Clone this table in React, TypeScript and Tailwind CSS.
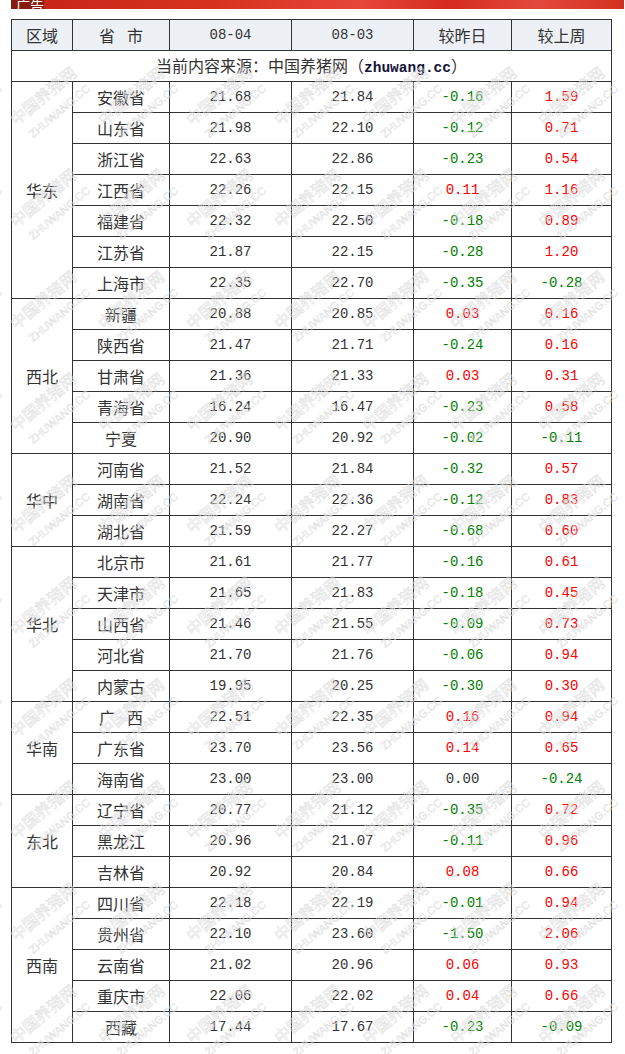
import React from "react";

type Row = [string, string, string, string, string];

const groups: { region: string; rows: Row[] }[] = [
  {
    region: "华东",
    rows: [
      ["安徽省", "21.68", "21.84", "-0.16", "1.59"],
      ["山东省", "21.98", "22.10", "-0.12", "0.71"],
      ["浙江省", "22.63", "22.86", "-0.23", "0.54"],
      ["江西省", "22.26", "22.15", "0.11", "1.16"],
      ["福建省", "22.32", "22.50", "-0.18", "0.89"],
      ["江苏省", "21.87", "22.15", "-0.28", "1.20"],
      ["上海市", "22.35", "22.70", "-0.35", "-0.28"],
    ],
  },
  {
    region: "西北",
    rows: [
      ["新疆", "20.88", "20.85", "0.03", "0.16"],
      ["陕西省", "21.47", "21.71", "-0.24", "0.16"],
      ["甘肃省", "21.36", "21.33", "0.03", "0.31"],
      ["青海省", "16.24", "16.47", "-0.23", "0.58"],
      ["宁夏", "20.90", "20.92", "-0.02", "-0.11"],
    ],
  },
  {
    region: "华中",
    rows: [
      ["河南省", "21.52", "21.84", "-0.32", "0.57"],
      ["湖南省", "22.24", "22.36", "-0.12", "0.83"],
      ["湖北省", "21.59", "22.27", "-0.68", "0.60"],
    ],
  },
  {
    region: "华北",
    rows: [
      ["北京市", "21.61", "21.77", "-0.16", "0.61"],
      ["天津市", "21.65", "21.83", "-0.18", "0.45"],
      ["山西省", "21.46", "21.55", "-0.09", "0.73"],
      ["河北省", "21.70", "21.76", "-0.06", "0.94"],
      ["内蒙古", "19.95", "20.25", "-0.30", "0.30"],
    ],
  },
  {
    region: "华南",
    rows: [
      ["广 西", "22.51", "22.35", "0.16", "0.94"],
      ["广东省", "23.70", "23.56", "0.14", "0.65"],
      ["海南省", "23.00", "23.00", "0.00", "-0.24"],
    ],
  },
  {
    region: "东北",
    rows: [
      ["辽宁省", "20.77", "21.12", "-0.35", "0.72"],
      ["黑龙江", "20.96", "21.07", "-0.11", "0.96"],
      ["吉林省", "20.92", "20.84", "0.08", "0.66"],
    ],
  },
  {
    region: "西南",
    rows: [
      ["四川省", "22.18", "22.19", "-0.01", "0.94"],
      ["贵州省", "22.10", "23.60", "-1.50", "2.06"],
      ["云南省", "21.02", "20.96", "0.06", "0.93"],
      ["重庆市", "22.06", "22.02", "0.04", "0.66"],
      ["西藏", "17.44", "17.67", "-0.23", "-0.09"],
    ],
  },
];

const cjk = "font-['Noto_Sans_CJK_SC',sans-serif] text-[16px]";
const mono = "font-['Liberation_Mono',monospace] text-[14px]";
const cell = "border border-[#333] text-center align-middle p-0 text-[#333]";

// colour for a change value
const changeColor = (v: string) => {
  const n = parseFloat(v);
  if (n > 0) return "text-[#ff0000]";
  if (n < 0) return "text-[#008000]";
  return "text-[#333]";
};

const WM_X = [-71, 17, 105, 193, 281, 369, 457, 545];
const WM_Y = Array.from({ length: 11 }, (_, i) => 25 + 102 * i);

function Watermark() {
  return (
    <div className="absolute left-0 top-[50px] w-[625px] bottom-0 overflow-hidden pointer-events-none">
      <svg width="625" height="1004" viewBox="0 50 625 1004">
        {WM_Y.map((y) =>
          WM_X.map((x) => (
            <g key={`${x}-${y}`} transform={`translate(${x} ${y}) rotate(-40)`}>
              <text
                x="0"
                y="-1"
                fontSize="16"
                fontFamily="Noto Sans CJK SC, sans-serif"
                fill="none"
                stroke="#dadada"
                strokeWidth="0.5"
              >
                中国养猪网
              </text>
              <text
                x="5"
                y="19"
                fontSize="11"
                fontFamily="Liberation Sans, sans-serif"
                fill="none"
                stroke="#dadada"
                strokeWidth="0.45"
              >
                ZHUWANG.CC
              </text>
            </g>
          ))
        )}
      </svg>
    </div>
  );
}

export default function App() {
  return (
    <div className="relative min-h-[1054px] w-[625px] bg-white">
      {/* top banner strip */}
      <div className="ml-[11px] flex h-[9px] w-[613px] overflow-hidden">
        <div className="flex h-[9px] w-[33px] items-end overflow-hidden bg-[#861c0e] pl-[5px]">
          <span className="-mb-[3px] text-[14px] leading-none text-white font-['Noto_Sans_CJK_SC',sans-serif]">广告</span>
        </div>
        <div className="h-[9px] flex-1 bg-[linear-gradient(90deg,#c9261a_0%,#d8331f_30%,#e6453a_55%,#d42c1e_70%,#e2493c_85%,#d3301f_100%)]" />
      </div>

      <table className="ml-[11px] mt-[10px] w-[600px] table-fixed border-collapse">
        <colgroup>
          <col className="w-[61px]" />
          <col className="w-[97px]" />
          <col className="w-[122px]" />
          <col className="w-[122px]" />
          <col className="w-[98px]" />
          <col className="w-[100px]" />
        </colgroup>
        <tbody>
          <tr className="h-[31px] bg-[#edf1f5]">
            <td className={`${cell} ${cjk}`}>区域</td>
            <td className={`${cell} ${cjk}`}>
              省<span className="inline-block w-[12px]" />市
            </td>
            <td className={`${cell} ${mono}`}>08-04</td>
            <td className={`${cell} ${mono}`}>08-03</td>
            <td className={`${cell} ${cjk}`}>较昨日</td>
            <td className={`${cell} ${cjk}`}>较上周</td>
          </tr>
          <tr className="h-[31px]">
            <td colSpan={6} className={`${cell} ${cjk}`}>
              当前内容来源：中国养猪网（
              <span className="font-['Liberation_Mono',monospace] text-[14.5px] font-bold text-[#14143a]">zhuwang.cc</span>
              ）
            </td>
          </tr>
          {groups.map((g) =>
            g.rows.map((r, i) => (
              <tr key={g.region + r[0]} className="h-[31px]">
                {i === 0 && (
                  <td rowSpan={g.rows.length} className={`${cell} ${cjk}`}>
                    {g.region}
                  </td>
                )}
                <td className={`${cell} ${cjk}`}>
                  {r[0] === "广 西" ? (
                    <>
                      广<span className="inline-block w-[12px]" />西
                    </>
                  ) : (
                    r[0]
                  )}
                </td>
                <td className={`${cell} ${mono}`}>{r[1]}</td>
                <td className={`${cell} ${mono}`}>{r[2]}</td>
                <td className={`${cell} ${mono} ${changeColor(r[3])}`}>{r[3]}</td>
                <td className={`${cell} ${mono} ${changeColor(r[4])}`}>{r[4]}</td>
              </tr>
            ))
          )}
        </tbody>
      </table>

      <Watermark />
    </div>
  );
}
